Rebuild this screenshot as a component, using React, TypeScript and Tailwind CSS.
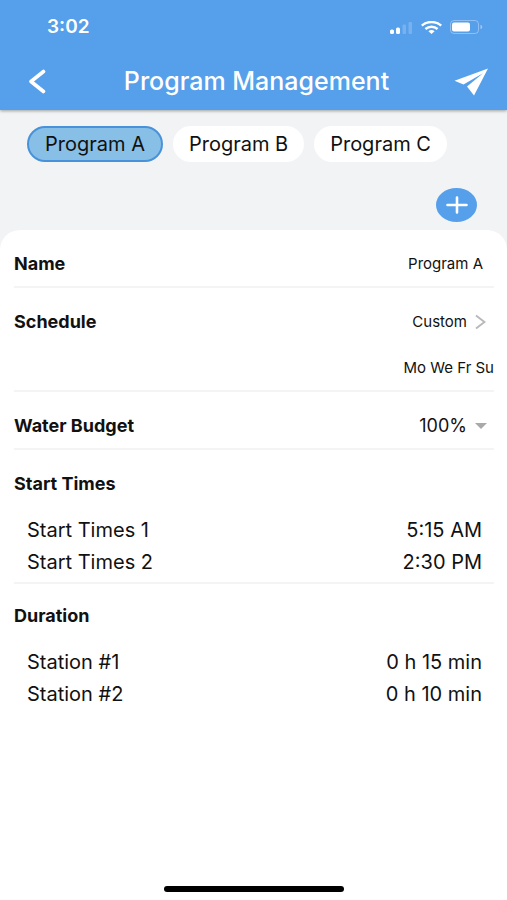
import { useState } from "react"
import type { ReactNode } from "react"

const programs = ["Program A", "Program B", "Program C"]

const startTimes = [
  { label: "Start Times 1", value: "5:15 AM" },
  { label: "Start Times 2", value: "2:30 PM" },
]

const durations = [
  { label: "Station #1", value: "0 h 15 min" },
  { label: "Station #2", value: "0 h 10 min" },
]

function StatusBar() {
  return (
    <div className="flex h-[54px] items-center justify-between pr-6 pl-[47px]">
      <span className="text-[19px] font-semibold">3:02</span>
      <div className="flex items-center gap-2">
        <svg width="23" height="13" viewBox="0 0 23 13" fill="currentColor" aria-hidden="true">
          <rect x="0" y="8.5" width="4" height="4.5" rx="1.5" />
          <rect x="6" y="6.5" width="4" height="6.5" rx="1.5" />
          <rect x="12.5" y="3.5" width="3.5" height="9.5" rx="1" opacity="0.2" />
          <rect x="18.5" y="1" width="3.5" height="12" rx="1" opacity="0.2" />
        </svg>
        <svg width="21" height="13" viewBox="0 0 21 13" fill="none" stroke="currentColor" strokeWidth="2.4" aria-hidden="true">
          <path d="M0.8 4.6C6.2 -0.2 14.8 -0.2 20.2 4.6" />
          <path d="M4.4 8C8 4.9 13 4.9 16.6 8" />
          <path d="M7.4 10.2C9.2 8.7 11.8 8.7 13.6 10.2L10.5 13Z" fill="currentColor" stroke="none" />
        </svg>
        <svg width="33" height="14" viewBox="0 0 33 14" fill="none" aria-hidden="true">
          <rect x="0.5" y="0.5" width="28" height="13" rx="3.5" stroke="currentColor" opacity="0.35" />
          <rect x="2" y="2.5" width="18" height="9" rx="2" fill="currentColor" />
          <path d="M30.5 4.8C32.8 5.6 32.8 8.4 30.5 9.2Z" fill="currentColor" opacity="0.45" />
        </svg>
      </div>
    </div>
  )
}

function Row({ label, htmlFor, children }: { label: string; htmlFor: string; children: ReactNode }) {
  return (
    <div className="flex h-7 items-center justify-between">
      <label htmlFor={htmlFor} className="text-lg font-bold">
        {label}
      </label>
      {children}
    </div>
  )
}

function ValueList({ title, items }: { title: string; items: { label: string; value: string }[] }) {
  return (
    <>
      <h2 className="text-lg leading-7 font-bold">{title}</h2>
      <ul className="mt-4 pr-3 pl-[13px] text-xl">
        {items.map((item) => (
          <li key={item.label} className="flex h-8 items-center justify-between">
            <span>{item.label}</span>
            <span>{item.value}</span>
          </li>
        ))}
      </ul>
    </>
  )
}

export default function App() {
  const [selected, setSelected] = useState("Program A")

  return (
    <div className="flex min-h-screen flex-col bg-[#f1f3f5] font-['Inter','Liberation_Sans',sans-serif] text-[#111]">
      <header className="relative bg-[#559feb] text-white shadow-[0_1px_3px_rgba(0,0,0,0.35)]">
        <StatusBar />
        <div className="flex h-14 items-center justify-between pr-[18px] pl-[27px]">
          <button type="button" aria-label="Back" className="w-8">
            <svg width="20" height="26" viewBox="0 0 20 26" fill="none" stroke="currentColor" strokeWidth="3.6" strokeLinecap="round" strokeLinejoin="round" aria-hidden="true">
              <path d="M16.5 2.5L4 12.5L16.5 22.5" />
            </svg>
          </button>
          <h1 className="text-[25px] font-medium">Program Management</h1>
          <button type="button" aria-label="Send" className="w-[35px]">
            <svg width="35" height="28" viewBox="0 0 35 28" fill="currentColor" aria-hidden="true">
              <path d="M34 0.5L0.5 12.8L9.5 16.6L29 5.2L13 18.6L20 27.5Z" />
            </svg>
          </button>
        </div>
      </header>

      <div className="flex gap-2.5 px-[27px] pt-4">
        {programs.map((program) => (
          <button
            key={program}
            type="button"
            aria-pressed={selected === program}
            onClick={() => setSelected(program)}
            className={
              selected === program
                ? "h-9 rounded-full border-2 border-[#4892da] bg-[#87bfe6] px-4 text-xl"
                : "h-9 rounded-full bg-white px-4 text-xl"
            }
          >
            {program}
          </button>
        ))}
      </div>

      <div className="flex justify-end pt-[26px] pr-[30px] pb-2">
        <button type="button" aria-label="Add program" className="flex h-[34px] w-[41px] items-center justify-center rounded-[50%] bg-[#559feb] text-white">
          <svg width="22" height="18" viewBox="0 0 22 18" fill="none" stroke="currentColor" strokeWidth="2.6" strokeLinecap="round" aria-hidden="true">
            <path d="M1.5 9H20.5M11 1.5V16.5" />
          </svg>
        </button>
      </div>

      <main className="flex flex-1 flex-col rounded-t-[20px] bg-white px-[13px] pl-3.5">
        <section className="border-b-2 border-[#f4f4f5] pt-5 pb-2">
          <Row label="Name" htmlFor="name">
            <input id="name" type="text" defaultValue="Program A" className="w-48 pr-[11px] text-right text-[15px]" />
          </Row>
        </section>

        <section className="border-b-2 border-[#f4f4f5] pt-5 pb-2">
          <Row label="Schedule" htmlFor="schedule">
            <button id="schedule" type="button" className="flex items-center gap-2 pr-2 text-[15px]">
              Custom
              <svg width="11" height="16" viewBox="0 0 11 16" fill="none" stroke="#b9b9bb" strokeWidth="2" aria-hidden="true">
                <path d="M1 1.5L9.5 8L1 14.5" />
              </svg>
            </button>
          </Row>
          <p className="mt-[18px] text-right text-[15px] leading-7">Mo We Fr Su</p>
        </section>

        <section className="border-b-2 border-[#f4f4f5] pt-5 pb-2">
          <Row label="Water Budget" htmlFor="budget">
            <div className="flex items-center gap-2 pr-[7px]">
              <select id="budget" defaultValue="100%" className="appearance-none text-right text-lg">
                <option>50%</option>
                <option>100%</option>
                <option>150%</option>
              </select>
              <svg width="12" height="6" viewBox="0 0 12 6" fill="#a9a9ab" aria-hidden="true">
                <path d="M0 0H12L6 6Z" />
              </svg>
            </div>
          </Row>
        </section>

        <section className="border-b-2 border-[#f4f4f5] pt-5 pb-1">
          <ValueList title="Start Times" items={startTimes} />
        </section>

        <section className="pt-[18px] pb-8">
          <ValueList title="Duration" items={durations} />
        </section>

        <div className="mx-auto mt-auto mb-2 h-1.5 w-[180px] rounded-full bg-black" />
      </main>
    </div>
  )
}
